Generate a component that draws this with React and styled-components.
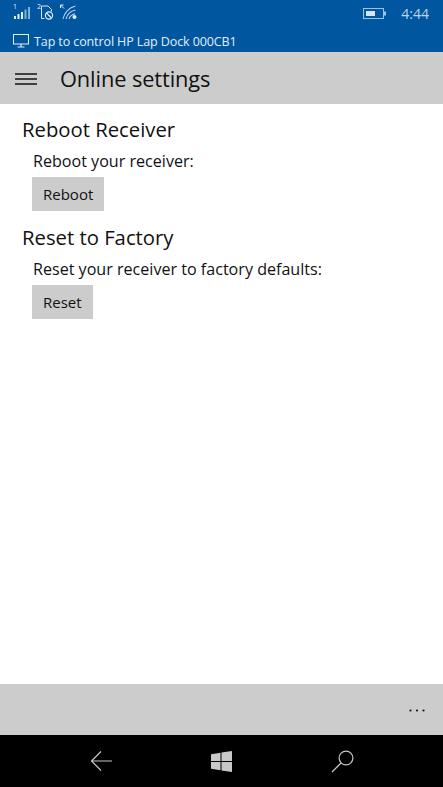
import styled, { createGlobalStyle } from 'styled-components';

const GlobalStyle = createGlobalStyle`
  html, body { margin: 0; padding: 0; background: #fff; }
  body { font-family: "Open Sans", "Noto Sans", sans-serif; }
`;

const Screen = styled.div`
  width: 443px;
  height: 787px;
  display: flex;
  flex-direction: column;
  overflow: hidden;
`;

// ── 상단 상태 표시줄 ──
const StatusArea = styled.div`
  height: 52px;
  background: #00569f;
  display: flex;
  flex-direction: column;
`;

const StatusRow = styled.div`
  height: 30px;
  display: flex;
  align-items: center;
  justify-content: space-between;
  padding: 0 14px 4px 13px;
  box-sizing: border-box;
`;

const SignalGroup = styled.div`
  display: flex;
  align-items: center;
  gap: 6px;
  margin-bottom: 4px;
`;

const ClockGroup = styled.div`
  display: flex;
  align-items: center;
  gap: 15px;
`;

const Clock = styled.span`
  font-size: 14px;
  color: #bcd5ec;
`;

const ControlRow = styled.div`
  height: 22px;
  display: flex;
  align-items: center;
  gap: 5px;
  padding-left: 13px;
  font-size: 12.5px;
  color: #e4eef7;
  letter-spacing: -0.1px;
`;

// ── 헤더 ──
const Header = styled.header`
  height: 52px;
  box-sizing: border-box;
  padding: 2px 0 0 15px;
  background: #cccccc;
  display: flex;
  align-items: center;
  gap: 23px;
`;

const Title = styled.h1`
  margin: -2px 0 0;
  font-size: 21.8px;
  font-weight: 400;
  color: #111;
  letter-spacing: -0.1px;
`;

const Content = styled.main`
  flex: 1;
  background: #fff;
  padding: 11px 0 0 22px;
  color: #111;
`;

const Section = styled.section`
  display: flex;
  flex-direction: column;
  align-items: flex-start;
  margin-bottom: 12px;
`;

const SectionTitle = styled.h2`
  margin: 0;
  height: 28px;
  line-height: 28px;
  font-size: 20.3px;
  font-weight: 400;
`;

const Description = styled.p`
  margin: 6px 0 0 11px;
  height: 25px;
  line-height: 25px;
  font-size: 16.1px;
`;

const ActionButton = styled.button`
  margin: 3px 0 0 10px;
  height: 34px;
  padding: 0 11px;
  border: 0;
  background: #cccccc;
  color: #111;
  font-family: inherit;
  font-size: 15px;
`;

// ── 하단 바 ──
const CommandBar = styled.div`
  height: 51px;
  background: #cccccc;
  display: flex;
  align-items: center;
  justify-content: flex-end;
  padding: 2px 18px 0 0;
  box-sizing: border-box;
`;

const NavBar = styled.nav`
  height: 52px;
  background: #000;
  display: flex;
  align-items: center;
  justify-content: center;
  gap: 99px;
`;

const SignalIcon = () => (
  <svg width="18" height="20" viewBox="0 0 18 20">
    <text x="0" y="8" fontSize="7" fill="#e6f0f8" fontFamily="Open Sans">1</text>
    <g fill="#e6f0f8">
      <rect x="1" y="15" width="2" height="3" />
      <rect x="4.5" y="13" width="2" height="5" />
      <rect x="8" y="11" width="2" height="7" />
    </g>
    <g fill="#7fb0d8">
      <rect x="11.5" y="8.500" width="2" height="9.500" />
      <rect x="15" y="6" width="2" height="12" />
    </g>
  </svg>
);

const SimIcon = () => (
  <svg width="17" height="20" viewBox="0 0 17 20">
    <text x="0" y="8" fontSize="7" fill="#e6f0f8" fontFamily="Open Sans">2</text>
    <path d="M4.500 17.500V5h6.500l3.500 3.500v2M4.500 17.500h3" fill="none" stroke="#d6e5f2" strokeWidth="1" />
    <circle cx="12" cy="14.500" r="3.600" fill="none" stroke="#e6f0f8" strokeWidth="1.100" />
    <path d="M9.500 12l5 5" stroke="#e6f0f8" strokeWidth="1.100" />
  </svg>
);

const WifiIcon = () => (
  <svg width="18" height="20" viewBox="0 0 18 20">
    <path d="M0.500 7V4h3M0.700 4.200l3.300 3.300" fill="none" stroke="#e6f0f8" strokeWidth="1" />
    <g fill="none" stroke="#bcd5ec" strokeWidth="1.100">
      <path d="M3 18C4 12 9 6.500 15.500 5" />
      <path d="M6 18C7 14 10.500 10 15.500 9" />
      <path d="M9 18C9.800 15.500 12 13.500 15 12.800" />
    </g>
    <circle cx="14.500" cy="16" r="2" fill="#e6f0f8" />
  </svg>
);

const BatteryIcon = () => (
  <svg width="23" height="11" viewBox="0 0 23 11">
    <rect x="0.500" y="0.500" width="20" height="10" fill="none" stroke="#9cc3e6" />
    <rect x="3" y="3" width="9" height="5" fill="#d8e6f2" />
    <rect x="21" y="3.500" width="2" height="4" fill="#9cc3e6" />
  </svg>
);

const MonitorIcon = () => (
  <svg width="16" height="14" viewBox="0 0 16 14">
    <rect x="0.500" y="0.500" width="15" height="9.500" fill="none" stroke="#e4eef7" />
    <path d="M8 10v2.500M4.500 13h7" stroke="#e4eef7" strokeWidth="1.200" />
  </svg>
);

const MenuIcon = () => (
  <svg width="22" height="12" viewBox="0 0 22 12">
    <path d="M0 1h22M0 6h22M0 11h22" stroke="#111" strokeWidth="1.400" />
  </svg>
);

const MoreIcon = () => (
  <svg width="16" height="3" viewBox="0 0 16 3">
    <g fill="#111">
      <circle cx="1.500" cy="1.500" r="1.100" />
      <circle cx="8" cy="1.500" r="1.100" />
      <circle cx="14.500" cy="1.500" r="1.100" />
    </g>
  </svg>
);

const BackIcon = () => (
  <svg width="22" height="22" viewBox="0 0 22 22">
    <path d="M22 11H1.500M11 1.500L1.500 11l9.500 9.500" fill="none" stroke="#c8c8c8" strokeWidth="1.200" />
  </svg>
);

const WindowsIcon = () => (
  <svg width="21" height="21" viewBox="0 0 21 21">
    <path fill="#c8c8c8" d="M0 3.200L9.500 1.800V10H0zM10.500 1.600L21 0v10H10.500zM0 11h9.500v8.200L0 17.800zM10.500 11H21v10l-10.500-1.600z" />
  </svg>
);

const SearchIcon = () => (
  <svg width="23" height="23" viewBox="0 0 23 23">
    <circle cx="15" cy="8" r="6.900" fill="none" stroke="#c8c8c8" strokeWidth="1.200" />
    <path d="M10 13L1 22" stroke="#c8c8c8" strokeWidth="1.200" />
  </svg>
);

export default function App() {
  return (
    <Screen>
      <GlobalStyle />
      <StatusArea>
        <StatusRow>
          <SignalGroup>
            <SignalIcon />
            <SimIcon />
            <WifiIcon />
          </SignalGroup>
          <ClockGroup>
            <BatteryIcon />
            <Clock>4:44</Clock>
          </ClockGroup>
        </StatusRow>
        <ControlRow>
          <MonitorIcon />
          <span>Tap to control HP Lap Dock 000CB1</span>
        </ControlRow>
      </StatusArea>

      <Header>
        <MenuIcon />
        <Title>Online settings</Title>
      </Header>

      <Content>
        <Section>
          <SectionTitle>Reboot Receiver</SectionTitle>
          <Description>Reboot your receiver:</Description>
          <ActionButton>Reboot</ActionButton>
        </Section>
        <Section>
          <SectionTitle>Reset to Factory</SectionTitle>
          <Description>Reset your receiver to factory defaults:</Description>
          <ActionButton>Reset</ActionButton>
        </Section>
      </Content>

      <CommandBar>
        <MoreIcon />
      </CommandBar>
      <NavBar>
        <BackIcon />
        <WindowsIcon />
        <SearchIcon />
      </NavBar>
    </Screen>
  );
}
